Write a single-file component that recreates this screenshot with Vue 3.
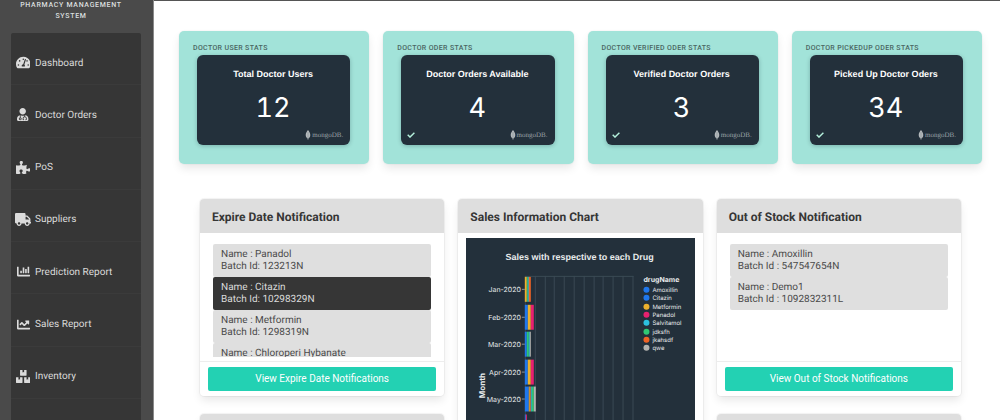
<script setup>
const menu = [
  { label: 'Dashboard', w: 576, d: 'M288 32C128.94 32 0 160.94 0 320c0 52.8 14.25 102.26 39.06 144.8 5.61 9.62 16.3 15.2 27.44 15.2h443c11.14 0 21.83-5.58 27.44-15.2C561.75 422.26 576 372.8 576 320c0-159.06-128.94-288-288-288zm0 64c14.71 0 26.58 10.13 30.32 23.65-1.11 2.26-2.64 4.23-3.45 6.67l-9.22 27.67c-5.13 3.49-10.97 6.01-17.64 6.01-17.67 0-32-14.33-32-32S270.33 96 288 96zM96 384c-17.67 0-32-14.33-32-32s14.33-32 32-32 32 14.33 32 32-14.33 32-32 32zm48-160c-17.67 0-32-14.33-32-32s14.33-32 32-32 32 14.33 32 32-14.33 32-32 32zm246.77-72.41l-61.33 184C343.13 347.33 352 364.54 352 384c0 11.72-3.38 22.55-8.88 32H232.88c-5.5-9.45-8.88-20.28-8.88-32 0-33.94 26.5-61.43 59.9-63.59l61.34-184.01c4.17-12.56 17.73-19.45 30.36-15.17 12.57 4.19 19.35 17.79 15.17 30.36zm14.66 57.2l15.52-46.55c3.47-1.29 7.13-2.23 11.05-2.23 17.67 0 32 14.33 32 32s-14.33 32-32 32c-11.38-.01-20.89-6.28-26.57-15.22zM480 384c-17.67 0-32-14.33-32-32s14.33-32 32-32 32 14.33 32 32-14.33 32-32 32z' },
  { label: 'Doctor Orders', w: 448, d: 'M224 256c70.7 0 128-57.3 128-128S294.7 0 224 0 96 57.3 96 128s57.3 128 128 128zM104 424c0 13.3 10.7 24 24 24s24-10.7 24-24-10.7-24-24-24-24 10.7-24 24zm216-135.4v49c36.5 7.4 64 39.8 64 78.4v41.7c0 7.6-5.4 14.2-12.9 15.7l-32.2 6.4c-4.3.9-8.5-1.9-9.4-6.3l-3.1-15.7c-.9-4.3 1.9-8.6 6.3-9.4l19.3-3.9V416c0-62.8-96-65.1-96 1.9v26.7l19.3 3.9c4.3.9 7.1 5.1 6.3 9.4l-3.1 15.7c-.9 4.3-5.1 7.1-9.4 6.3l-31.2-4.2c-7.9-1.1-13.8-7.8-13.8-15.9V416c0-38.6 27.5-70.9 64-78.4v-45.2c-2.2.7-4.4 1.1-6.6 1.9-18 6.3-37.3 9.8-57.4 9.8s-39.4-3.5-57.4-9.8c-7.4-2.6-14.9-4.2-22.6-5.2v81.6c23.1 6.9 40 28.1 40 53.4 0 30.9-25.1 56-56 56s-56-25.1-56-56c0-25.3 16.9-46.5 40-53.4v-80.4C48.5 301 0 355.8 0 422.4v44.8C0 491.9 20.1 512 44.8 512h358.4c24.7 0 44.8-20.1 44.8-44.8v-44.8c0-72-56.8-130.3-128-133.8z' },
  { label: 'PoS', w: 576, d: 'M519.442 288.651c-41.519 0-59.5 31.593-82.058 31.593C377.409 320.244 432 144 432 144s-196.288 80-196.288-3.297c0-35.827 36.288-46.25 36.288-85.985C272 19.216 243.885 0 210.539 0c-34.654 0-66.366 18.891-66.366 56.346 0 41.364 31.711 59.277 31.711 81.75C175.885 207.719 0 166.758 0 166.758v333.237s178.635 41.047 178.635-28.662c0-22.473-40-40.107-40-81.471 0-37.456 29.25-56.346 63.577-56.346 33.673 0 61.788 19.216 61.788 54.717 0 39.735-36.288 50.158-36.288 85.985 0 60.803 129.675 25.73 181.23 25.73 0 0-34.725-120.101 25.827-120.101 35.962 0 46.423 36.152 86.308 36.152C556.712 416 576 387.99 576 354.443c0-34.199-18.962-65.792-56.558-65.792z' },
  { label: 'Suppliers', w: 640, d: 'M624 352h-16V243.9c0-12.7-5.1-24.9-14.1-33.9L494 110.1c-9-9-21.2-14.1-33.9-14.1H416V48c0-26.5-21.5-48-48-48H48C21.5 0 0 21.5 0 48v320c0 26.5 21.5 48 48 48h16c0 53 43 96 96 96s96-43 96-96h128c0 53 43 96 96 96s96-43 96-96h48c8.8 0 16-7.2 16-16v-32c0-8.8-7.2-16-16-16zM160 464c-26.5 0-48-21.5-48-48s21.5-48 48-48 48 21.5 48 48-21.5 48-48 48zm320 0c-26.5 0-48-21.5-48-48s21.5-48 48-48 48 21.5 48 48-21.5 48-48 48zm80-208H416V144h44.1l99.9 99.9V256z' },
  { label: 'Prediction Report', w: 512, d: 'M332.8 320h38.4c6.4 0 12.8-6.4 12.8-12.8V172.8c0-6.4-6.4-12.8-12.8-12.8h-38.4c-6.4 0-12.8 6.4-12.8 12.8v134.4c0 6.4 6.4 12.8 12.8 12.8zm96 0h38.4c6.4 0 12.8-6.4 12.8-12.8V76.8c0-6.4-6.4-12.8-12.8-12.8h-38.4c-6.4 0-12.8 6.4-12.8 12.8v230.4c0 6.4 6.4 12.8 12.8 12.8zm-288 0h38.4c6.4 0 12.8-6.4 12.8-12.8v-70.4c0-6.4-6.4-12.8-12.8-12.8h-38.4c-6.4 0-12.8 6.4-12.8 12.8v70.4c0 6.4 6.4 12.8 12.8 12.8zm96 0h38.4c6.4 0 12.8-6.4 12.8-12.8V108.8c0-6.4-6.4-12.8-12.8-12.8h-38.4c-6.4 0-12.8 6.4-12.8 12.8v198.4c0 6.4 6.4 12.8 12.8 12.8zM496 384H64V80c0-8.84-7.16-16-16-16H16C7.16 64 0 71.16 0 80v336c0 17.67 14.33 32 32 32h464c8.84 0 16-7.16 16-16v-32c0-8.84-7.16-16-16-16z' },
  { label: 'Sales Report', w: 512, d: 'M496 384H64V80c0-8.84-7.16-16-16-16H16C7.16 64 0 71.16 0 80v336c0 17.67 14.33 32 32 32h464c8.84 0 16-7.16 16-16v-32c0-8.84-7.16-16-16-16zM464 96H345.94c-21.38 0-32.09 25.85-16.97 40.97l32.4 32.4L288 242.75l-73.37-73.37c-12.5-12.5-32.76-12.5-45.25 0l-68.69 68.69c-6.25 6.25-6.25 16.38 0 22.63l22.62 22.62c6.25 6.25 16.38 6.25 22.63 0L192 237.25l73.37 73.37c12.5 12.5 32.76 12.5 45.25 0l96-96 32.4 32.4c15.12 15.12 40.97 4.41 40.97-16.97V112c.01-8.84-7.15-16-15.99-16z' },
  { label: 'Inventory', w: 576, d: 'M560 288h-80v96l-32-21.3-32 21.3v-96h-80c-8.8 0-16 7.2-16 16v192c0 8.8 7.2 16 16 16h224c8.8 0 16-7.2 16-16V304c0-8.8-7.2-16-16-16zm-384-64h224c8.8 0 16-7.2 16-16V16c0-8.8-7.2-16-16-16h-80v96l-32-21.3L256 96V0h-80c-8.8 0-16 7.2-16 16v192c0 8.8 7.2 16 16 16zm64 64h-80v96l-32-21.3L96 384v-96H16c-8.8 0-16 7.2-16 16v192c0 8.8 7.2 16 16 16h224c8.8 0 16-7.2 16-16V304c0-8.8-7.2-16-16-16z' },
]

const stats = [
  { heading: 'Doctor user stats', title: 'Total Doctor Users', value: 12, check: false },
  { heading: 'Doctor oder stats', title: 'Doctor Orders Available', value: 4, check: true },
  { heading: 'Doctor verified oder stats', title: 'Verified Doctor Orders', value: 3, check: true },
  { heading: 'Doctor pickedup oder stats', title: 'Picked Up Doctor Oders', value: 34, check: true },
]

const expiring = [
  { name: 'Panadol', batch: '123213N' },
  { name: 'Citazin', batch: '10298329N', active: true },
  { name: 'Metformin', batch: '1298319N' },
  { name: 'Chloroperi Hybanate', batch: '' },
]
const outOfStock = [
  { name: 'Amoxillin', batch: '547547654N' },
  { name: 'Demo1', batch: '1092832311L' },
]

const blue = '#1f77ec'
const yellow = '#ebb02d'
const pink = '#e8216f'
const cyan = '#2cc0e0'
const green = '#2fc774'
const orange = '#ee6325'
const grey = '#b3b3b0'
const legend = [
  ['Amoxillin', blue], ['Citazin', blue], ['Metformin', yellow], ['Panadol', pink],
  ['Salvitamol', cyan], ['jdksfh', green], ['jkahsdf', orange], ['qwe', grey],
]
// Each segment is [x offset, width, colour].
const months = [
  { label: 'Jan-2020', y: 39, segs: [[0, 2, yellow], [2, 1, green], [3, 1, cyan], [4, 2, orange]] },
  { label: 'Feb-2020', y: 67, segs: [[0, 3, blue], [3, 3, yellow], [6, 3, pink]] },
  { label: 'Mar-2020', y: 94, segs: [[0, 2, blue], [2, 2, green], [4, 1, cyan], [5, 1, grey]] },
  { label: 'Apr-2020', y: 122, segs: [[0, 3, blue], [3, 3, yellow], [6, 3, pink]] },
  { label: 'May-2020', y: 149, segs: [[0, 4, blue], [4, 1, yellow], [5, 1, orange], [6, 1, cyan], [7, 2, green], [9, 2, grey]] },
  { label: '', y: 177, segs: [[0, 1, blue], [1, 1, pink]] },
]
</script>

<template>
  <div class="app">
    <aside class="sidebar">
      <p class="brand">Pharmacy management system</p>
      <nav class="menu">
        <a v-for="m in menu" :key="m.label" href="#" class="menu-item">
          <span class="menu-icon">
            <svg :viewBox="`0 0 ${m.w} 512`" aria-hidden="true"><path :d="m.d" fill="currentColor" /></svg>
          </span>
          <span>{{ m.label }}</span>
        </a>
      </nav>
    </aside>

    <main class="main">
      <section class="stats">
        <article v-for="s in stats" :key="s.heading" class="stat">
          <p class="stat-heading">{{ s.heading }}</p>
          <div class="tile">
            <h2 class="tile-title">{{ s.title }}</h2>
            <p class="tile-value">{{ s.value }}</p>
            <div class="tile-foot">
              <svg v-if="s.check" class="check" viewBox="0 0 8 6" aria-hidden="true">
                <path d="M.7 2.800l2.300 2.300L7.400.700" fill="none" stroke="#b4f0dc" stroke-width="1.4" />
              </svg>
              <span class="mongo">
                <svg class="leaf" viewBox="0 0 6 10" aria-hidden="true">
                  <path d="M3 0C4 1.3 5.3 2.8 5.3 5 5.3 7 4.300 8 3.300 8.600L3.200 10H2.800L2.700 8.600C1.700 8 .7 7 .7 5 .7 2.800 2 1.300 3 0z" fill="#b4b9bc" />
                  <path d="M3 2v7" stroke="#7f898f" stroke-width=".5" />
                </svg>
                <span>mongoDB.</span>
              </span>
            </div>
          </div>
        </article>
      </section>

      <section class="panels">
        <div class="column">
          <article class="panel">
            <h3 class="panel-head">Expire Date Notification</h3>
            <ul class="list">
              <li v-for="e in expiring" :key="e.name" class="entry" :class="{ active: e.active }">
                <div>Name : {{ e.name }}</div>
                <div v-if="e.batch">Batch Id: {{ e.batch }}</div>
              </li>
            </ul>
            <div class="panel-foot"><button type="button" class="btn">View Expire Date Notifications</button></div>
          </article>
          <article class="panel"><div class="panel-head"></div></article>
        </div>

        <div class="column">
          <article class="panel">
            <h3 class="panel-head">Sales Information Chart</h3>
            <div class="chart-wrap">
              <svg class="chart" viewBox="0 0 229 220" role="img" aria-label="Sales with respective to each Drug">
                <text x="114" y="22" class="chart-title" text-anchor="middle">Sales with respective to each Drug</text>
                <g stroke="#3a4954" stroke-width="1">
                  <path v-for="n in 12" :key="n" :d="`M${59.5 + Math.round((n - 1) * 9.8)} 38V220`" />
                  <path d="M59 38.500H168" />
                </g>
                <g v-for="m in months" :key="m.y">
                  <template v-if="m.label">
                    <text x="55" :y="m.y + 15" text-anchor="end" class="axis">{{ m.label }}</text>
                    <path :d="`M56 ${m.y + 12.5}h3`" stroke="#8b949a" />
                  </template>
                  <rect v-for="(s, i) in m.segs" :key="i" :x="59 + s[0]" :y="m.y" :width="s[1]" height="25" :fill="s[2]" />
                </g>
                <text x="-148" y="19" text-anchor="middle" transform="rotate(-90)" class="axis-title">Month</text>
                <text x="178" y="44" class="legend-title">drugName</text>
                <g v-for="(l, i) in legend" :key="l[0]">
                  <circle cx="181" :cy="52 + Math.round(i * 8.3)" r="3" :fill="l[1]" />
                  <text x="187" :y="54 + Math.round(i * 8.3)" class="legend">{{ l[0] }}</text>
                </g>
              </svg>
            </div>
          </article>
        </div>

        <div class="column">
          <article class="panel">
            <h3 class="panel-head">Out of Stock Notification</h3>
            <ul class="list">
              <li v-for="e in outOfStock" :key="e.name" class="entry">
                <div>Name : {{ e.name }}</div>
                <div>Batch Id : {{ e.batch }}</div>
              </li>
            </ul>
            <div class="panel-foot"><button type="button" class="btn">View Out of Stock Notifications</button></div>
          </article>
          <article class="panel"><div class="panel-head"></div></article>
        </div>
      </section>
    </main>
  </div>
</template>

<style>
body { background: #fff; }
</style>

<style scoped>
* { box-sizing: border-box; margin: 0; padding: 0; }
.app { display: flex; height: 100vh; overflow: hidden; font-family: Roboto, "Liberation Sans", sans-serif; color: #363636; text-rendering: geometricPrecision; }
.sidebar { flex: none; width: 154px; background: #4a4a4a; border-right: 1px solid #8a8a8a; padding: 0 12px 0 11px; }
.brand { height: 33px; padding: 0 14px 0 4px; font-size: 7px; line-height: 11px; font-weight: 500; letter-spacing: 0.1em; text-align: center; text-transform: uppercase; color: #dbdfdf; }
.menu { display: grid; grid-template-rows: repeat(7, 1fr); height: 418px; padding-bottom: 52px; background: #363636; border-radius: 2px; }
.menu-item { display: flex; align-items: center; gap: 3px; padding: 10px 3px 0; border-bottom: 1px solid #3b3b3b; color: #dbdbdb; font-size: 10px; line-height: 14px; text-decoration: none; }
.menu-icon { display: flex; justify-content: center; width: 18px; padding-bottom: 2px; }
.menu-icon svg { height: 13px; width: auto; flex: none; }

.main { flex: 1; min-width: 0; border-top: 1px solid #555; }
.stats { display: grid; grid-template-columns: repeat(4, 1fr); gap: 14px; padding: 30px 18px 35px 25px; }
.stat { height: 133px; padding: 12px 19px 0 18px; background: #a2e3d9; border-radius: 5px; box-shadow: 0 5px 10px -1px rgba(10, 10, 10, .1), 0 0 0 1px rgba(10, 10, 10, .02); }
.stat-heading { height: 12px; margin-left: -4px; font-size: 7px; line-height: 10px; font-weight: 500; letter-spacing: 0.05em; text-transform: uppercase; white-space: nowrap; color: #4a6662; }
.tile { display: flex; flex-direction: column; height: 90px; padding: 12px 7px 4px 6px; background: #23303b; border-radius: 6px; box-shadow: 0 1px 4px rgba(0, 30, 40, .25); color: #fff; font-family: Inter, "Liberation Sans", sans-serif; text-align: center; }
.tile-title { font-family: "Liberation Sans", sans-serif; font-size: 9px; line-height: 14px; font-weight: 700; white-space: nowrap; }
.tile-value { flex: 1; padding-top: 10px; font-size: 27px; line-height: 34px; font-weight: 400; font-variant-numeric: tabular-nums; }
.tile-foot { display: flex; align-items: center; height: 12px; }
.check { width: 8px; height: 6px; }
.mongo { display: flex; align-items: center; gap: 1px; margin-left: auto; font-family: "Liberation Serif", serif; font-size: 7px; line-height: 10px; color: #9aa2a7; }
.leaf { width: 6px; height: 10px; }

.panels { display: grid; grid-template-columns: repeat(3, 1fr); gap: 14px; padding: 0 39px 0 46px; }
.column { display: flex; flex-direction: column; gap: 18px; min-width: 0; }
.panel { background: #fff; border-radius: 4px; box-shadow: 0 5px 10px -1px rgba(10, 10, 10, .1), 0 0 0 1px rgba(10, 10, 10, .04); }
.panel-head { height: 34px; padding: 0 12px; background: #dedede; border-radius: 4px 4px 0 0; font-size: 12px; line-height: 36px; font-weight: 700; }
.list { height: 113px; margin: 11px 13px 4px; overflow: hidden; list-style: none; }
.entry { height: 33px; padding: 5px 8px 4px; background: #dfdfdf; border-radius: 2px; font-size: 10px; line-height: 12px; color: #4a4a4a; }
.entry.active { background: #363636; color: #dbdbdb; }
.panel-foot { padding: 5px 8px; border-top: 1px solid #ededed; }
.btn { display: block; width: 100%; height: 24px; border: 0; border-radius: 2px; background: #23d1b3; color: #fff; font: 400 10px/24px Roboto, sans-serif; }

.chart-wrap { padding: 5px 8px 8px; }
.chart { display: block; width: 100%; background: #23303b; font-family: Inter, sans-serif; fill: #e8ebec; }
.chart-title { font-family: "Liberation Sans", sans-serif; font-size: 9px; font-weight: 700; }
.axis { font-size: 7px; }
.axis-title { font-size: 8px; font-weight: 700; }
.legend-title { font-size: 7px; font-weight: 700; }
.legend { font-size: 6px; }
</style>
